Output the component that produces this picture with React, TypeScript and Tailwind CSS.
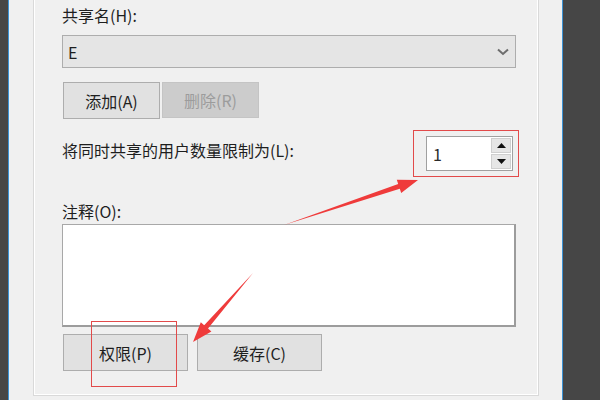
import React from "react";

const font = { fontFamily: '"Microsoft YaHei", "Noto Sans CJK SC", "Noto Sans", sans-serif' };

export default function App() {
  return (
    <div className="relative w-[600px] h-[400px] overflow-hidden flex text-[16px] text-[#1e1e1e]" style={font}>
      <div className="w-[8px] bg-[#464646]" />
      <div className="w-[1px] bg-[#3c92d4]" />
      <div className="w-[1px] bg-[#e4f1fa]" />
      <div className="w-[552px] bg-[#f0f0f0] px-[23px]">
        <div className="w-[506px] h-[396px] border-l border-r border-b border-[#d9d9d9] shadow-[inset_1px_0_0_#fff,inset_-1px_0_0_#fff,inset_0_-1px_0_#fff] flex flex-col pl-[28px] pr-[22px] pt-[5px]">
          <div className="h-[20px] leading-[20px]">共享名(H):</div>
          <div className="mt-[10px] h-[33px] border border-[#adadad] bg-[#e5e5e5] flex items-center justify-between pl-[5px] pr-[6px]">
            <span className="leading-[20px]">E</span>
            <svg width="12" height="8" viewBox="0 0 12 8">
              <path d="M1 1.5 L6 6 L11 1.5" fill="none" stroke="#6d6d6d" strokeWidth="2" />
            </svg>
          </div>
          <div className="mt-[14px] h-[37px] flex gap-[2px] pl-[1px]">
            <div className="w-[97px] h-[37px] border border-[#adadad] bg-[#e1e1e1] flex items-center justify-center leading-[20px]">添加(A)</div>
            <div className="w-[97px] h-[36px] border border-[#c4c4c4] bg-[#cccccc] flex items-center justify-center leading-[20px] text-[#9c9c9c]">删除(R)</div>
          </div>
          <div className="mt-[17px] h-[35px] flex justify-between items-start">
            <div className="mt-[4px] h-[20px] leading-[20px]">将同时共享的用户数量限制为(L):</div>
            <div className="mr-[3px] w-[87px] h-[35px] border border-[#a0a0a0] bg-white flex">
              <div className="flex-1 pl-[6px] flex items-center leading-[20px] text-[#2a2a2a]">1</div>
              <div className="w-[22px] flex flex-col p-[1px] gap-[1px]">
                <div className="flex-1 bg-[#e6e6e6] border border-[#cfcfcf] flex items-center justify-center">
                  <svg width="9" height="5" viewBox="0 0 9 5"><path d="M0 5 L4.5 0 L9 5 Z" fill="#111" /></svg>
                </div>
                <div className="flex-1 bg-[#e6e6e6] border border-[#cfcfcf] flex items-center justify-center">
                  <svg width="9" height="5" viewBox="0 0 9 5"><path d="M0 0 L4.5 5 L9 0 Z" fill="#111" /></svg>
                </div>
              </div>
            </div>
          </div>
          <div className="mt-[30px] h-[20px] leading-[20px]">注释(O):</div>
          <div className="mt-[3px] h-[103px] border border-[#a8a8a8] border-r-2 border-b-2 border-r-[#9c9c9c] border-b-[#9c9c9c] bg-white" />
          <div className="mt-[7px] h-[37px] flex gap-[9px] pl-[1px]">
            <div className="w-[125px] h-[37px] border border-[#adadad] bg-[#e1e1e1] flex items-center justify-center leading-[20px]">权限(P)</div>
            <div className="w-[125px] h-[37px] border border-[#adadad] bg-[#e1e1e1] flex items-center justify-center leading-[20px]">缓存(C)</div>
          </div>
        </div>
      </div>
      <div className="w-[1px] bg-[#3c92d4]" />
      <div className="flex-1 bg-[#464646]" />
      <svg className="absolute inset-0 pointer-events-none" width="600" height="400" viewBox="0 0 600 400">
        <rect x="413.5" y="130.5" width="105" height="46" fill="none" stroke="#e24a4a" strokeWidth="1" />
        <rect x="91.5" y="321.5" width="85" height="65" fill="none" stroke="#e24a4a" strokeWidth="1" />
        <polygon points="284,225 399.8,188.8 401.2,193.1 418,180 396.8,179.7 398.2,184" fill="#ef3b3b" />
        <polygon points="253,273 208,328.5 211.4,331.5 193,342 200.8,322.3 204.2,325.3" fill="#ef3b3b" />
      </svg>
    </div>
  );
}
